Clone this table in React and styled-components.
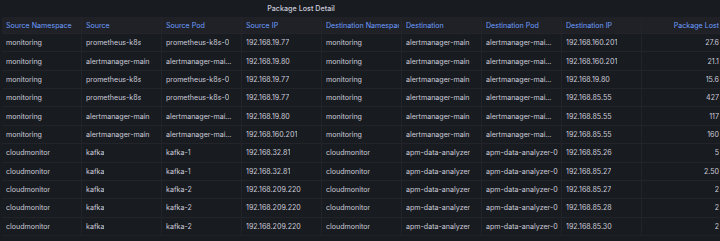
import styled, { createGlobalStyle } from "styled-components";

const GlobalStyle = createGlobalStyle`
  html, body {
    margin: 0;
    padding: 0;
    background: #111217;
  }
  body {
    font-family: Inter, "Noto Sans", sans-serif;
  }
`;

const Panel = styled.div`
  width: 720px;
  height: 241px;
  background: #181b1f;
  display: flex;
  flex-direction: column;
  overflow: hidden;
`;

const Title = styled.div`
  height: 17px;
  display: flex;
  align-items: center;
  justify-content: center;
  padding-right: 118px;
  color: #ccccdc;
  font-size: 7.2px;
  font-weight: 500;
`;

const Table = styled.div`
  display: flex;
  flex-direction: column;
  margin-left: 2px;
  background: #181b1f;
  border-bottom: 1px solid #202226;
`;

const Row = styled.div`
  display: grid;
  grid-template-columns: repeat(8, 80px) 1fr;
  height: ${(p) => (p.$head ? "16px" : "18.36px")};
  background: ${(p) => (p.$head ? "#1f2127" : "#181b1f")};
  border-top: ${(p) => (p.$head ? "none" : "1px solid #222429")};
  box-sizing: border-box;
`;

const Cell = styled.div`
  display: flex;
  align-items: center;
  justify-content: ${(p) => (p.$right ? "flex-end" : "flex-start")};
  padding: 0 ${(p) => (p.$right ? "1px" : "2px")} 0 4px;
  border-right: ${(p) => (p.$last ? "none" : "1px solid #222429")};
  color: ${(p) => (p.$head ? "#6e9fff" : "#ccccdc")};
  font-size: 7.1px;
  white-space: nowrap;
  overflow: hidden;
  min-width: 0;
`;

const Text = styled.span`
  overflow: hidden;
  text-overflow: ${(p) => (p.$clip ? "clip" : "ellipsis")};
`;

const columns = [
  "Source Namespace",
  "Source",
  "Source Pod",
  "Source IP",
  "Destination Namespace",
  "Destination",
  "Destination Pod",
  "Destination IP",
  "Package Lost",
];

const am = "alertmanager-mai…";

const rows = [
  ["monitoring", "prometheus-k8s", "prometheus-k8s-0", "192.168.19.77", "monitoring", "alertmanager-main", am, "192.168.160.201", "27.6"],
  ["monitoring", "alertmanager-main", am, "192.168.19.80", "monitoring", "alertmanager-main", am, "192.168.160.201", "21.1"],
  ["monitoring", "prometheus-k8s", "prometheus-k8s-0", "192.168.19.77", "monitoring", "alertmanager-main", am, "192.168.19.80", "15.6"],
  ["monitoring", "prometheus-k8s", "prometheus-k8s-0", "192.168.19.77", "monitoring", "alertmanager-main", am, "192.168.85.55", "427"],
  ["monitoring", "alertmanager-main", am, "192.168.19.80", "monitoring", "alertmanager-main", am, "192.168.85.55", "117"],
  ["monitoring", "alertmanager-main", am, "192.168.160.201", "monitoring", "alertmanager-main", am, "192.168.85.55", "160"],
  ["cloudmonitor", "kafka", "kafka-1", "192.168.32.81", "cloudmonitor", "apm-data-analyzer", "apm-data-analyzer-0", "192.168.85.26", "5"],
  ["cloudmonitor", "kafka", "kafka-1", "192.168.32.81", "cloudmonitor", "apm-data-analyzer", "apm-data-analyzer-0", "192.168.85.27", "2.50"],
  ["cloudmonitor", "kafka", "kafka-2", "192.168.209.220", "cloudmonitor", "apm-data-analyzer", "apm-data-analyzer-0", "192.168.85.27", "2"],
  ["cloudmonitor", "kafka", "kafka-2", "192.168.209.220", "cloudmonitor", "apm-data-analyzer", "apm-data-analyzer-0", "192.168.85.28", "2"],
  ["cloudmonitor", "kafka", "kafka-2", "192.168.209.220", "cloudmonitor", "apm-data-analyzer", "apm-data-analyzer-0", "192.168.85.30", "2"],
];

function App() {
  return (
    <Panel>
      <GlobalStyle />
      <Title>Package Lost Detail</Title>
      <Table>
        <Row $head>
          {columns.map((c, i) => (
            <Cell key={c} $head $right={i === 8} $last={i === 8}>
              <Text $clip>{c}</Text>
            </Cell>
          ))}
        </Row>
        {rows.map((r, ri) => (
          <Row key={ri}>
            {r.map((v, i) => (
              <Cell key={i} $right={i === 8} $last={i === 8}>
                <Text>{v}</Text>
              </Cell>
            ))}
          </Row>
        ))}
      </Table>
    </Panel>
  );
}

export default App;
